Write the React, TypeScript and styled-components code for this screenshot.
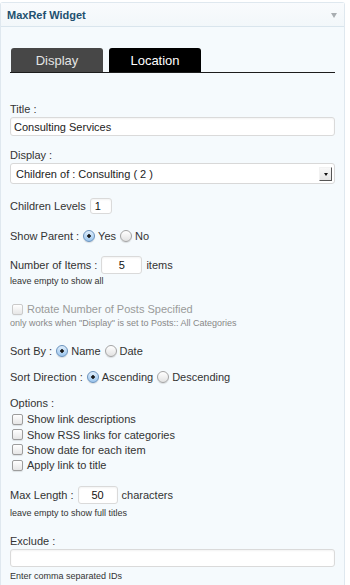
import React from "react"
import styled, {createGlobalStyle} from "styled-components"

const GlobalStyle = createGlobalStyle`
  html, body {
    margin: 0;
    padding: 0;
    background: #fff;
  }
  body {
    font-family: "Liberation Sans", Arial, Helvetica, sans-serif;
    font-size: 11px;
    color: #333;
  }
`

const Widget = styled.div`
  box-sizing: border-box;
  width: 345px;
  min-height: 583px;
  margin-top: 2px;
  border: 1px solid #dfe8ef;
  border-bottom: none;
  border-radius: 3px 3px 0 0;
  background: #f5fafd;
`

const Header = styled.div`
  height: 23px;
  border-bottom: 1px solid #d9e5ed;
  background: linear-gradient(#f9fbfd, #f2f7fa);
  display: flex;
  align-items: center;
  justify-content: space-between;
  padding: 0 7px 0 6px;
`

const HeaderTitle = styled.h3`
  margin: 0;
  font-size: 11px;
  font-weight: bold;
  color: #22506f;
`

const Toggle = styled.span`
  width: 0;
  height: 0;
  border-left: 3.5px solid transparent;
  border-right: 3.5px solid transparent;
  border-top: 5px solid #a8adb1;
  margin-top: 2px;
`

const Body = styled.div`
  padding: 21px 9px 0 9px;
`

const TabBar = styled.div`
  display: flex;
  gap: 6px;
  padding-left: 1px;
  border-bottom: 1px solid #1c1c1c;
`

const Tab = styled.div<{$active?: boolean}>`
  width: 92px;
  height: 24px;
  border-radius: 3px 3px 0 0;
  background: ${(p) => (p.$active ? "#000" : "#474747")};
  color: ${(p) => (p.$active ? "#fff" : "#e4e4e4")};
  font-size: 13px;
  display: flex;
  align-items: center;
  justify-content: center;
`

const FieldLabel = styled.div<{$mt: number}>`
  margin-top: ${(p) => p.$mt}px;
  line-height: 14px;
  margin-bottom: 1px;
`

const TextInput = styled.input<{$h?: number}>`
  box-sizing: border-box;
  display: block;
  width: 100%;
  height: ${(p) => p.$h ?? 19}px;
  margin: 0;
  padding: 0 3px;
  border: 1px solid #dadada;
  border-radius: 3px;
  background: #fff;
  box-shadow: inset 0 1px 2px rgba(0, 0, 0, 0.05);
  font-family: inherit;
  font-size: 11px;
  color: #222;
  outline: none;
`

const SelectBox = styled.div`
  box-sizing: border-box;
  height: 21px;
  border: 1px solid #d8d8d8;
  border-radius: 3px;
  background: #fff;
  display: flex;
  align-items: center;
  justify-content: space-between;
  padding: 0 2px 0 5px;
  color: #222;
`

const SelectArrow = styled.span`
  box-sizing: border-box;
  width: 13px;
  height: 14px;
  background: linear-gradient(#f8f8f8, #e4e4e4);
  border-right: 1px solid #555;
  border-bottom: 1px solid #555;
  border-top: 1px solid #f2f2f2;
  border-left: 1px solid #f2f2f2;
  display: flex;
  align-items: center;
  justify-content: center;

  &::after {
    content: "";
    width: 0;
    height: 0;
    border-left: 2.5px solid transparent;
    border-right: 2.5px solid transparent;
    border-top: 3px solid #111;
    margin-top: 1px;
  }
`

const Row = styled.div<{$mt: number; $h?: number; $muted?: boolean}>`
  display: flex;
  align-items: center;
  margin-top: ${(p) => p.$mt}px;
  height: ${(p) => p.$h ?? 14}px;
  color: ${(p) => (p.$muted ? "#9a9a9a" : "#333")};
  white-space: nowrap;
`

const SmallInput = styled.input<{$w: number; $center?: boolean}>`
  box-sizing: border-box;
  width: ${(p) => p.$w}px;
  height: ${(p) => (p.$w < 30 ? 16 : 18)}px;
  margin: 0 4px;
  padding: 0 4px;
  border: 1px solid #dadada;
  border-radius: 3px;
  background: #fff;
  box-shadow: inset 0 1px 2px rgba(0, 0, 0, 0.05);
  font-family: inherit;
  font-size: 11px;
  color: #111;
  text-align: ${(p) => (p.$center ? "center" : "left")};
  outline: none;
`

const Radio = styled.span<{$checked?: boolean}>`
  box-sizing: border-box;
  width: 12px;
  height: 12px;
  border-radius: 50%;
  margin: 0 3px 0 4px;
  border: 1px solid ${(p) => (p.$checked ? "#6a92bd" : "#a4a4a4")};
  background: ${(p) =>
    p.$checked
      ? "radial-gradient(circle, #1a1a1a 0 1.5px, transparent 1.9px), linear-gradient(#deedfb, #9cc6ee)"
      : "linear-gradient(#ffffff, #e2e2e2)"};
  box-shadow: 0 1px 1px rgba(0, 0, 0, 0.12);
`

const Check = styled.span<{$disabled?: boolean}>`
  box-sizing: border-box;
  width: 11px;
  height: 11px;
  border-radius: 2px;
  margin: 0 4px 0 2px;
  border: 1px solid ${(p) => (p.$disabled ? "#cacaca" : "#9d9d9d")};
  background: linear-gradient(#ffffff, #e6e6e6);
  box-shadow: 0 1px 1px rgba(0, 0, 0, ${(p) => (p.$disabled ? 0.04 : 0.1)});
`

const Hint = styled.div<{$mt: number; $muted?: boolean}>`
  margin-top: ${(p) => p.$mt}px;
  font-size: 9px;
  line-height: 11px;
  color: ${(p) => (p.$muted ? "#888" : "#333")};
`

const OptionRow = styled.div<{$first?: boolean}>`
  display: flex;
  align-items: center;
  height: 15.4px;
  margin-top: ${(p) => (p.$first ? 1.5 : 0)}px;
`

const options = [
  "Show link descriptions",
  "Show RSS links for categories",
  "Show date for each item",
  "Apply link to title",
]

export default function App() {
  return (
    <>
      <GlobalStyle />
      <Widget>
        <Header>
          <HeaderTitle>MaxRef Widget</HeaderTitle>
          <Toggle />
        </Header>
        <Body>
          <TabBar>
            <Tab>Display</Tab>
            <Tab $active>Location</Tab>
          </TabBar>

          <FieldLabel $mt={29}>Title :</FieldLabel>
          <TextInput defaultValue="Consulting Services" />

          <FieldLabel $mt={12}>Display :</FieldLabel>
          <SelectBox>
            <span>Children of : Consulting ( 2 )</span>
            <SelectArrow />
          </SelectBox>

          <Row $mt={13} $h={18}>
            Children Levels
            <SmallInput $w={22} defaultValue="1" />
          </Row>

          <Row $mt={14}>
            Show Parent :<Radio $checked />
            Yes
            <Radio />
            No
          </Row>

          <Row $mt={13} $h={18}>
            Number of Items :
            <SmallInput $w={41} $center defaultValue="5" />
            items
          </Row>
          <Hint $mt={2}>leave empty to show all</Hint>

          <Row $mt={15} $muted>
            <Check $disabled />
            Rotate Number of Posts Specified
          </Row>
          <Hint $mt={2} $muted>
            only works when "Display" is set to Posts:: All Categories
          </Hint>

          <Row $mt={15}>
            Sort By :<Radio $checked />
            Name
            <Radio />
            Date
          </Row>

          <Row $mt={12}>
            Sort Direction :<Radio $checked />
            Ascending
            <Radio />
            Descending
          </Row>

          <FieldLabel $mt={12}>Options :</FieldLabel>
          {options.map((o, i) => (
            <OptionRow key={o} $first={i === 0}>
              <Check />
              {o}
            </OptionRow>
          ))}

          <Row $mt={12.5} $h={18}>
            Max Length :
            <SmallInput $w={40} $center defaultValue="50" />
            characters
          </Row>
          <Hint $mt={4}>leave empty to show full titles</Hint>

          <FieldLabel $mt={15}>Exclude :</FieldLabel>
          <TextInput $h={18} />
          <Hint $mt={4}>Enter comma separated IDs</Hint>
        </Body>
      </Widget>
    </>
  )
}
